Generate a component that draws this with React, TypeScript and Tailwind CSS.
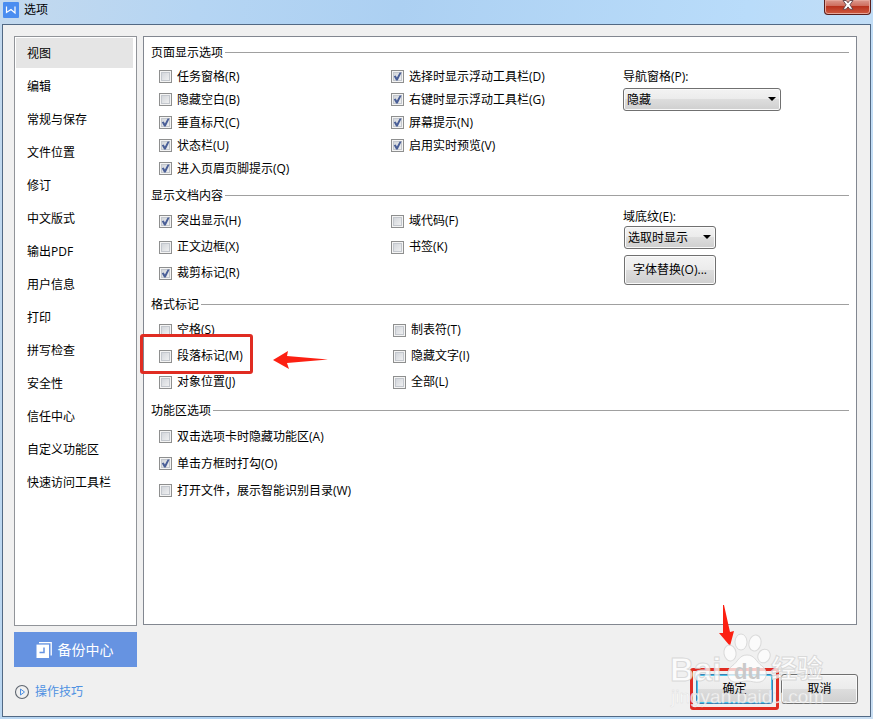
import { useState } from "react";
import { clsx } from "clsx";

const navItems = [
  "视图",
  "编辑",
  "常规与保存",
  "文件位置",
  "修订",
  "中文版式",
  "输出PDF",
  "用户信息",
  "打印",
  "拼写检查",
  "安全性",
  "信任中心",
  "自定义功能区",
  "快速访问工具栏",
];

interface Option {
  label: string;
  checked?: boolean;
  marked?: boolean;
}

const pageLeft: Option[] = [
  { label: "任务窗格(R)" },
  { label: "隐藏空白(B)" },
  { label: "垂直标尺(C)", checked: true },
  { label: "状态栏(U)", checked: true },
  { label: "进入页眉页脚提示(Q)", checked: true },
];

const pageRight: Option[] = [
  { label: "选择时显示浮动工具栏(D)", checked: true },
  { label: "右键时显示浮动工具栏(G)", checked: true },
  { label: "屏幕提示(N)", checked: true },
  { label: "启用实时预览(V)", checked: true },
];

const contentLeft: Option[] = [
  { label: "突出显示(H)", checked: true },
  { label: "正文边框(X)" },
  { label: "裁剪标记(R)", checked: true },
];

const contentRight: Option[] = [{ label: "域代码(F)" }, { label: "书签(K)" }];

const markLeft: Option[] = [
  { label: "空格(S)" },
  { label: "段落标记(M)", marked: true },
  { label: "对象位置(J)" },
];

const markRight: Option[] = [
  { label: "制表符(T)" },
  { label: "隐藏文字(I)" },
  { label: "全部(L)" },
];

const ribbon: Option[] = [
  { label: "双击选项卡时隐藏功能区(A)" },
  { label: "单击方框时打勾(O)", checked: true },
  { label: "打开文件，展示智能识别目录(W)" },
];

const face =
  "rounded-[3px] border border-[#707070] bg-[linear-gradient(#f3f3f3,#ebebeb_50%,#dddddd_50%,#cfcfcf)] shadow-[inset_0_0_0_1px_#fafafa]";

function CheckRow({ option, height }: { option: Option; height: string }) {
  return (
    <div className={clsx("flex items-center", height)}>
      <label className="relative flex items-center gap-[5px] whitespace-nowrap">
        <input
          type="checkbox"
          defaultChecked={option.checked}
          className="peer size-[13px] shrink-0 appearance-none border border-[#8e8f8f] bg-[linear-gradient(135deg,#cbcfd5,#f6f6f6)] shadow-[inset_0_0_0_1px_#f4f4f4,inset_0_0_0_2px_#c3c7cd]"
        />
        <svg
          viewBox="0 0 13 13"
          className="pointer-events-none invisible absolute left-0 size-[13px] peer-checked:visible"
        >
          <path d="M2.800 6.300 L4.700 5.400 L5.900 7.600 L8.600 2.400 L10.600 2.400 L6.700 10.400 L5.100 10.400 Z" fill="#4a5f97" />
        </svg>
        <span>{option.label}</span>
        {option.marked && (
          <>
            <span className="pointer-events-none absolute -top-3.5 -right-2.5 -bottom-2.5 -left-[19px] rounded-[3px] border-[3px] border-[#e02c22]" />
            <svg
              viewBox="0 0 56 20"
              className="pointer-events-none absolute left-[114px] h-5 w-14 translate-y-1"
            >
              <path d="M0 10 L15 1 L14 6 L55 9.500 L14 13 L16 19 Z" fill="#fc2012" />
            </svg>
          </>
        )}
      </label>
    </div>
  );
}

function Options({ items, height = "h-[26px]" }: { items: Option[]; height?: string }) {
  return (
    <div>
      {items.map((item) => (
        <CheckRow key={item.label} option={item} height={height} />
      ))}
    </div>
  );
}

function Section({
  title,
  className,
  children,
}: {
  title: string;
  className?: string;
  children: React.ReactNode;
}) {
  return (
    <section className={className}>
      <h2 className="ml-[7px] flex h-[25px] items-center gap-0.5 after:h-px after:flex-1 after:bg-[#a0a0a0]">
        {title}
      </h2>
      <div className="ml-[15px] grid grid-cols-[232px_232px_1fr]">{children}</div>
    </section>
  );
}

function Dropdown({
  id,
  value,
  className,
}: {
  id: string;
  value: string;
  className: string;
}) {
  return (
    <div className={clsx("relative", className)}>
      <select id={id} className={clsx("h-[23px] w-full appearance-none pl-[3px]", face)}>
        <option>{value}</option>
      </select>
      <svg viewBox="0 0 8 4" className="pointer-events-none absolute top-[9px] right-[5px] h-1 w-2">
        <path d="M0 0 H8 L4 4 Z" fill="#000" />
      </svg>
    </div>
  );
}

function Watermark() {
  return (
    <svg
      viewBox="0 0 170 86"
      className="pointer-events-none absolute right-[33px] bottom-1.5 z-10 h-[86px] w-[170px]"
      aria-hidden="true"
    >
      <g fill="#fff" fillOpacity="0.75" stroke="#d2d2d2" strokeOpacity="0.8">
        <ellipse cx="63" cy="29" rx="6" ry="8" transform="rotate(-10 63 29)" />
        <ellipse cx="74" cy="18" rx="6" ry="8" />
        <ellipse cx="88" cy="19" rx="6" ry="8" transform="rotate(14 88 19)" />
        <ellipse cx="97" cy="32" rx="6" ry="7" transform="rotate(25 97 32)" />
        <path d="M80 31 C72 31 71 38 65 42 C59 46 59 56 67 58 C72 59 75 57 80 57 C85 57 88 59 93 58 C101 56 101 46 95 42 C89 38 88 31 80 31 Z" />
        <text x="3" y="57" fontFamily="Liberation Sans, sans-serif" fontSize="33" fontWeight="700">
          Bai
        </text>
        <text x="104" y="54" fontFamily="Noto Sans CJK SC, sans-serif" fontSize="26" fontWeight="700">
          经验
        </text>
      </g>
      <text
        x="67"
        y="55"
        fill="#c9c9c9"
        fontFamily="Liberation Sans, sans-serif"
        fontSize="22"
        fontWeight="700"
      >
        du
      </text>
      <text
        x="4"
        y="79"
        fill="#fff"
        fillOpacity="0.75"
        stroke="#dcdcdc"
        strokeWidth="0.4"
        fontFamily="Liberation Sans, sans-serif"
        fontSize="19"
      >
        jingyan.baidu.com
      </text>
    </svg>
  );
}

export default function App() {
  const [active, setActive] = useState("视图");

  return (
    <div className="flex min-h-screen flex-col bg-[linear-gradient(100deg,#c3d9ee,#b5d5f3_20%,#acd0f2_40%,#b9dcfa_75%,#c9def2)] pr-[2px] pb-[2px] pl-[2px] font-['Open_Sans','Noto_Sans_CJK_SC',sans-serif] text-xs leading-4 text-black">
      <header className="flex h-6 items-start justify-between">
        <div className="flex items-center gap-[5px] pt-0.5 pl-px">
          <svg viewBox="0 0 16 16" className="size-4">
            <rect width="16" height="16" rx="1" fill="#4a8df0" />
            <path d="M3.500 4.500 V10.500 L8 7.500 L12 11 V4.500" fill="none" stroke="#fff" strokeWidth="1.200" />
          </svg>
          <h1>选项</h1>
        </div>
        <button
          type="button"
          aria-label="关闭"
          className="flex h-[15px] w-[47px] items-center justify-center rounded-b-[4px] border border-t-0 border-[#5a1f1c] bg-[linear-gradient(#dc9a8e,#cf6f5f_40%,#b8321d_45%,#cf5a40)] shadow-[inset_0_0_0_1px_#e6a79b]"
        >
          <svg viewBox="0 0 12 10" className="mb-1 h-2.5 w-3">
            <path
              d="M1 0.500 H4.200 L6 2.800 L7.800 0.500 H11 L7.900 4.800 L11 9.200 H7.800 L6 6.900 L4.200 9.200 H1 L4.100 4.800 Z"
              fill="#fff"
              stroke="#5d4046"
              strokeWidth="0.900"
            />
          </svg>
        </button>
      </header>

      <main className="relative flex flex-1 gap-1.5 border border-[#526984] bg-[#f0f0f0] pt-[11px] pr-3 pl-[11px]">
        <div className="flex w-[123px] shrink-0 flex-col">
          <nav className="flex-1 border border-[#919499] bg-white p-px">
            {navItems.map((item) => (
              <button
                key={item}
                type="button"
                onClick={() => setActive(item)}
                className="block h-[33px] w-full pr-0.5 pb-[3px] text-left"
              >
                <span
                  className={clsx(
                    "flex h-[30px] items-center pt-0.5 pl-[11px]",
                    item === active && "bg-[#e5e5e5]"
                  )}
                >
                  {item}
                </span>
              </button>
            ))}
          </nav>
          <button
            type="button"
            className="mt-1.5 flex h-[35px] items-center justify-center gap-1.5 bg-[#6693e1] pr-0.5 text-sm text-white"
          >
            <svg viewBox="0 0 16 16" className="size-4">
              <path d="M3 0.700 H15.200 V13.500" fill="none" stroke="#fff" strokeWidth="1.300" />
              <path d="M0.500 2.600 H13 V16 H0.500 Z" fill="#fff" />
              <path d="M8 5.500 V10.500 H3.500" fill="none" stroke="#6693e1" strokeWidth="1.500" />
            </svg>
            备份中心
          </button>
          <a href="#tips" className="mt-[17px] mb-4 flex items-center gap-[5px] text-[#4e90e2]">
            <svg viewBox="0 0 16 16" className="size-4" fill="none">
              <circle cx="8" cy="8" r="6.500" stroke="#5f6670" strokeWidth="1.100" />
              <path d="M6.500 5 L10.500 8 L6.500 11 Z" stroke="#4e90e2" />
            </svg>
            操作技巧
          </a>
        </div>

        <div className="flex min-w-0 flex-1 flex-col">
          <div className="mr-px flex-1 border border-[#828790] bg-white pt-[3px] pr-[7px]">
            <Section title="页面显示选项" className="mb-[3px]">
              <Options items={pageLeft} height="h-[23px]" />
              <Options items={pageRight} height="h-[23px]" />
              <div>
                <label htmlFor="nav-pane" className="flex h-[23px] items-center">
                  导航窗格(P):
                </label>
                <Dropdown id="nav-pane" value="隐藏" className="w-[158px]" />
              </div>
            </Section>

            <Section title="显示文档内容" className="mb-1.5">
              <Options items={contentLeft} />
              <Options items={contentRight} />
              <div>
                <label htmlFor="field-shading" className="flex h-[18px] items-center">
                  域底纹(E):
                </label>
                <Dropdown id="field-shading" value="选取时显示" className="ml-px w-[92px]" />
                <button type="button" className={clsx("mt-1.5 ml-px h-[30px] w-[92px]", face)}>
                  字体替换(O)...
                </button>
              </div>
            </Section>

            <Section title="格式标记" className="mb-[3px]">
              <Options items={markLeft} />
              <div className="pl-0.5">
                <Options items={markRight} />
              </div>
            </Section>

            <Section title="功能区选项">
              <Options items={ribbon} height="h-[27px]" />
            </Section>
          </div>

          <footer className="mt-[49px] mb-3 flex justify-end gap-2">
            <div className="relative">
              <button
                type="button"
                className="h-[30px] w-[77px] rounded-[3px] border border-[#3c7fb1] bg-[linear-gradient(#f3f3f3,#ebebeb_50%,#dddddd_50%,#cfcfcf)] shadow-[inset_0_0_0_1px_#45c2ea]"
              >
                确定
              </button>
              <span className="pointer-events-none absolute -inset-1.5 rounded-[3px] border-[3px] border-[#e02c22]" />
              <svg
                viewBox="0 0 16 42"
                className="pointer-events-none absolute -top-[69px] left-[23px] h-[42px] w-4"
              >
                <path d="M4 0 L5 0 L11 27 L15 26 L11 41 L0 28 L4 28 Z" fill="#fc2012" />
              </svg>
            </div>
            <button type="button" className={clsx("h-[30px] w-[77px]", face)}>
              取消
            </button>
          </footer>
        </div>
        <Watermark />
      </main>
    </div>
  );
}
